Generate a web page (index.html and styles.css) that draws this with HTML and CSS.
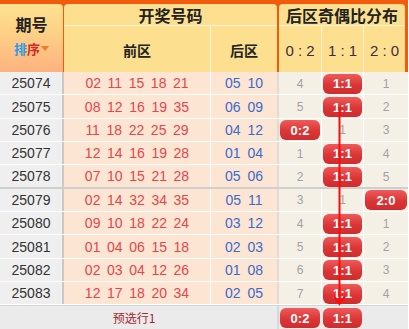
FILE: index.html
```html
<!DOCTYPE html>
<html lang="zh">
<head>
<meta charset="utf-8">
<title>后区奇偶比分布</title>
<link rel="stylesheet" href="styles.css">
</head>
<body>
<div class="board">
  <div class="head">
    <div class="h-issue">
      <div class="h-issue-title">期号</div>
      <div class="sort"><span class="sort-a">排</span><span class="sort-b">序</span><span class="tri"></span></div>
    </div>
    <div class="h-draw">
      <div class="h-title">开奖号码</div>
      <div class="h-sub">
        <div class="hs-front">前区</div>
        <div class="hs-back">后区</div>
      </div>
    </div>
    <div class="h-dist">
      <div class="h-title">后区奇偶比分布</div>
      <div class="h-sub">
        <div class="hs-d1">0 : 2</div>
        <div class="hs-d2">1 : 1</div>
        <div class="hs-d3">2 : 0</div>
      </div>
    </div>
  </div>

  <div class="rows">
    <div class="row">
      <div class="c-issue">25074</div>
      <div class="c-front"><span>02</span><span>11</span><span>15</span><span>18</span><span>21</span></div>
      <div class="c-back"><span>05</span><span>10</span></div>
      <div class="c-d1">4</div><div class="c-d2"><b class="badge">1:1</b></div><div class="c-d3">1</div>
    </div>
    <div class="row">
      <div class="c-issue">25075</div>
      <div class="c-front"><span>08</span><span>12</span><span>16</span><span>19</span><span>35</span></div>
      <div class="c-back"><span>06</span><span>09</span></div>
      <div class="c-d1">5</div><div class="c-d2"><b class="badge">1:1</b></div><div class="c-d3">2</div>
    </div>
    <div class="row">
      <div class="c-issue">25076</div>
      <div class="c-front"><span>11</span><span>18</span><span>22</span><span>25</span><span>29</span></div>
      <div class="c-back"><span>04</span><span>12</span></div>
      <div class="c-d1"><b class="badge">0:2</b></div><div class="c-d2">1</div><div class="c-d3">3</div>
    </div>
    <div class="row">
      <div class="c-issue">25077</div>
      <div class="c-front"><span>12</span><span>14</span><span>16</span><span>19</span><span>28</span></div>
      <div class="c-back"><span>01</span><span>04</span></div>
      <div class="c-d1">1</div><div class="c-d2"><b class="badge">1:1</b></div><div class="c-d3">4</div>
    </div>
    <div class="row row-split">
      <div class="c-issue">25078</div>
      <div class="c-front"><span>07</span><span>10</span><span>15</span><span>21</span><span>28</span></div>
      <div class="c-back"><span>05</span><span>06</span></div>
      <div class="c-d1">2</div><div class="c-d2"><b class="badge">1:1</b></div><div class="c-d3">5</div>
    </div>
    <div class="row">
      <div class="c-issue">25079</div>
      <div class="c-front"><span>02</span><span>14</span><span>32</span><span>34</span><span>35</span></div>
      <div class="c-back"><span>05</span><span>11</span></div>
      <div class="c-d1">3</div><div class="c-d2">1</div><div class="c-d3"><b class="badge">2:0</b></div>
    </div>
    <div class="row">
      <div class="c-issue">25080</div>
      <div class="c-front"><span>09</span><span>10</span><span>18</span><span>22</span><span>24</span></div>
      <div class="c-back"><span>03</span><span>12</span></div>
      <div class="c-d1">4</div><div class="c-d2"><b class="badge">1:1</b></div><div class="c-d3">1</div>
    </div>
    <div class="row">
      <div class="c-issue">25081</div>
      <div class="c-front"><span>01</span><span>04</span><span>06</span><span>15</span><span>18</span></div>
      <div class="c-back"><span>02</span><span>03</span></div>
      <div class="c-d1">5</div><div class="c-d2"><b class="badge">1:1</b></div><div class="c-d3">2</div>
    </div>
    <div class="row">
      <div class="c-issue">25082</div>
      <div class="c-front"><span>02</span><span>03</span><span>04</span><span>12</span><span>26</span></div>
      <div class="c-back"><span>01</span><span>08</span></div>
      <div class="c-d1">6</div><div class="c-d2"><b class="badge">1:1</b></div><div class="c-d3">3</div>
    </div>
    <div class="row">
      <div class="c-issue">25083</div>
      <div class="c-front"><span>12</span><span>17</span><span>18</span><span>20</span><span>34</span></div>
      <div class="c-back"><span>02</span><span>05</span></div>
      <div class="c-d1">7</div><div class="c-d2"><b class="badge">1:1</b></div><div class="c-d3">4</div>
    </div>
  </div>

  <div class="foot">
    <div class="f-label">预选行1</div>
    <div class="c-d1"><b class="badge">0:2</b></div>
    <div class="c-d2"><b class="badge">1:1</b></div>
    <div class="c-d3"></div>
  </div>

  <svg class="trend" width="408" height="329" viewBox="0 0 408 329">
    <line x1="339.5" y1="107" x2="339.5" y2="303" stroke="#ff0a0a" stroke-width="2"/>
    <polyline points="334,296 339.5,304 345,296" fill="none" stroke="#ff0a0a" stroke-width="2"/>
  </svg>
</div>
</body>
</html>
```

FILE: styles.css
```css
* {
  box-sizing: border-box;
  margin: 0;
  padding: 0;
}

body {
  margin: 0;
  background: #fff;
  font-family: "Liberation Sans", Arial, "Noto Sans CJK SC", sans-serif;
  color: #333;
}

.board {
  position: relative;
  width: 408px;
  overflow: hidden;
}

/* ---------- header ---------- */
.head {
  display: flex;
  height: 72px;
  background: #f25a0c;
  padding: 4px 3px 0 0;
}

.h-issue {
  width: 63px;
  border-radius: 0 4px 0 0;
  background: linear-gradient(#fde28f, #fdcf86 45%, #fdb27f);
  display: flex;
  flex-direction: column;
  align-items: center;
  justify-content: center;
  gap: 3px;
  padding-bottom: 6px;
}

.h-issue-title {
  font-family: "Noto Sans CJK SC", sans-serif;
  font-weight: bold;
  font-size: 16px;
  line-height: 23px;
  color: #222;
}

.sort {
  display: flex;
  align-items: center;
  font-family: "Noto Sans CJK SC", sans-serif;
  font-weight: bold;
  font-size: 13px;
  line-height: 19px;
}

.sort-a { color: #2f9be6; }
.sort-b { color: #d42a2a; }

.tri {
  width: 0;
  height: 0;
  margin-left: 1px;
  border-left: 4px solid transparent;
  border-right: 4px solid transparent;
  border-top: 5px solid #f07a2a;
}

.h-draw,
.h-dist {
  display: flex;
  flex-direction: column;
  border-radius: 4px 4px 0 0;
  background: #fde08f;
}

.h-draw {
  width: 213px;
  margin-left: 1px;
}

.h-dist {
  width: 126px;
  margin-left: 2px;
}

.h-title {
  height: 22px;
  border-bottom: 1px solid #fff3d2;
  display: flex;
  align-items: center;
  justify-content: center;
  font-family: "Noto Sans CJK SC", sans-serif;
  font-weight: bold;
  font-size: 16px;
  color: #222;
  padding-top: 1px;
}

.h-sub {
  flex: 1;
  display: flex;
}

.h-sub > div {
  display: flex;
  align-items: center;
  justify-content: center;
  padding-top: 2px;
}

.hs-front,
.hs-back {
  font-family: "Noto Sans CJK SC", sans-serif;
  font-weight: bold;
  font-size: 14px;
  color: #222;
}

.hs-front {
  width: 147px;
  border-right: 1px solid #fff6dc;
}

.hs-back {
  flex: 1;
}

.hs-d1, .hs-d2, .hs-d3 {
  font-size: 15px;
  color: #432a3e;
}

.hs-d1 { width: 43px; border-right: 1px solid #fff3d2; }
.hs-d2 { width: 42px; border-right: 1px solid #fff3d2; }
.hs-d3 { flex: 1; }

/* ---------- rows ---------- */
.row {
  display: flex;
  height: 23.35px;
  border-bottom: 1px solid #fff;
}

.row-split {
  border-bottom: 2px solid #cfcfcf;
}

.row > div,
.foot > div {
  display: flex;
  align-items: center;
  justify-content: center;
}

.c-issue {
  width: 64px;
  background: #efeff0;
  border-right: 2px solid #c9c9c9;
  font-size: 14px;
  color: #333;
}

.c-front {
  width: 147px;
  background: #fde5d3;
  border-right: 1px solid #fff;
  gap: 6.6px;
  font-size: 14px;
  color: #e4464d;
}

.c-back {
  width: 68px;
  background: #fde5d3;
  border-right: 2px solid #e3dbcf;
  gap: 6.8px;
  font-size: 14px;
  color: #3b6bcb;
}

.c-d1, .c-d2, .c-d3 {
  background: #f5f0e6;
  font-size: 12px;
  color: #a2a2a2;
  padding: 1px 1px 0;
}

.c-d1 { width: 43px; border-right: 1px solid #fff; }
.c-d2 { width: 42px; border-right: 1px solid #fff; }
.c-d3 { width: 44px; padding-right: 1px; }

.badge {
  display: flex;
  align-items: center;
  justify-content: center;
  width: 100%;
  height: 20px;
  border-radius: 6px;
  background: linear-gradient(#ef5a5a, #db3636 55%, #cf2c2e);
  color: #fff;
  font-size: 13px;
  font-weight: bold;
}

/* ---------- footer ---------- */
.foot {
  display: flex;
  height: 24px;
  background: #ebebeb;
  border-top: 1px solid #d6d6d6;
}

.foot .c-d1,
.foot .c-d2,
.foot .c-d3 {
  background: #ebebeb;
  border-right-color: #ebebeb;
}

.f-label {
  width: 279px;
  border-right: 2px solid #d9d9d9;
  padding-right: 9px;
  font-family: "Noto Sans CJK SC", sans-serif;
  font-size: 12px;
  color: #a3282c;
}

.trend {
  position: absolute;
  left: 0;
  top: 0;
  pointer-events: none;
}
```
